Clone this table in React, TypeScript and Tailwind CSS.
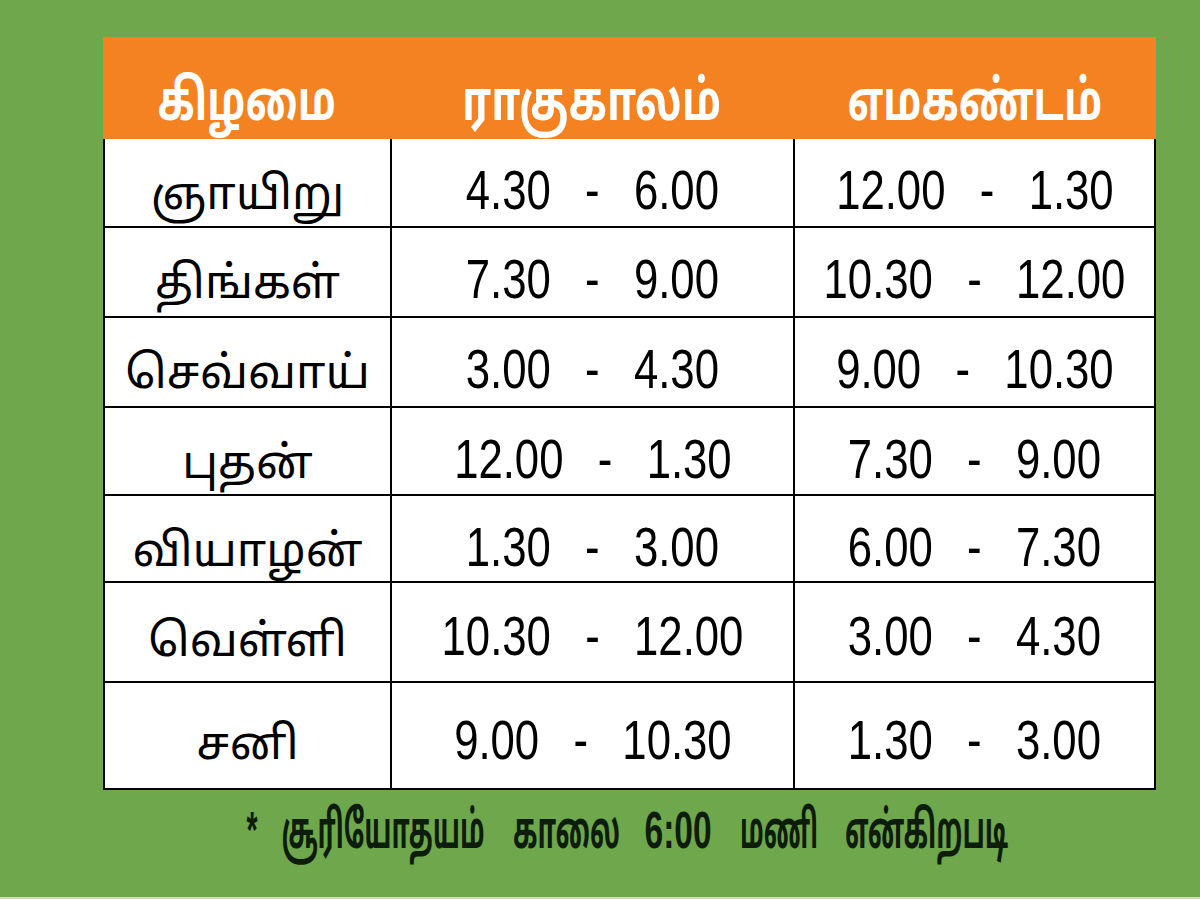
import React, { useLayoutEffect, useRef, useState } from "react";

const rows: { day: string; rahu: [string, string]; ema: [string, string]; h: string }[] = [
  { day: "ஞாயிறு", rahu: ["4.30", "6.00"], ema: ["12.00", "1.30"], h: "h-[89px]" },
  { day: "திங்கள்", rahu: ["7.30", "9.00"], ema: ["10.30", "12.00"], h: "h-[90px]" },
  { day: "செவ்வாய்", rahu: ["3.00", "4.30"], ema: ["9.00", "10.30"], h: "h-[90px]" },
  { day: "புதன்", rahu: ["12.00", "1.30"], ema: ["7.30", "9.00"], h: "h-[88px]" },
  { day: "வியாழன்", rahu: ["1.30", "3.00"], ema: ["6.00", "7.30"], h: "h-[87px]" },
  { day: "வெள்ளி", rahu: ["10.30", "12.00"], ema: ["3.00", "4.30"], h: "h-[100px]" },
  { day: "சனி", rahu: ["9.00", "10.30"], ema: ["1.30", "3.00"], h: "h-[105px]" },
];

const tamil = "font-['Latha','Noto_Sans_Tamil','Lohit_Tamil','Noto_Sans',sans-serif]";
const latin = "font-['Liberation_Sans',Arial,sans-serif]";

function Fit({ w, className, children }: { w: number; className?: string; children: React.ReactNode }) {
  const ref = useRef<HTMLSpanElement>(null);
  const [s, setS] = useState(1);
  useLayoutEffect(() => {
    const measure = () => {
      if (ref.current && ref.current.offsetWidth > 0) setS(w / ref.current.offsetWidth);
    };
    measure();
    if ((document as any).fonts?.ready) (document as any).fonts.ready.then(measure);
  }, [w]);
  return (
    <span className="inline-flex justify-center shrink-0" style={{ width: w }}>
      <span
        ref={ref}
        className={`inline-block whitespace-nowrap origin-center ${className ?? ""}`}
        style={{ transform: `scaleX(${s})` }}
      >
        {children}
      </span>
    </span>
  );
}

function Range({ v }: { v: [string, string] }) {
  return (
    <span className={`inline-flex items-center gap-[44px] scale-x-[0.78] ${latin} text-[56px] leading-none text-black`}>
      <span>{v[0]}</span>
      <span>-</span>
      <span>{v[1]}</span>
    </span>
  );
}

export default function App() {
  const foot = `text-[52px] leading-none font-bold text-[#0e1d0b]`;
  return (
    <div className="w-[1200px] h-[899px] bg-[#6fa84c] pt-[37px] flex flex-col border-b-2 border-[#cfdcb0]">
      <div className="w-[1053px] ml-[103px]">
        <div className="grid grid-cols-[287px_403px_363px] h-[102px] bg-[#f58220] items-center text-white font-bold">
          <div className={`flex justify-center text-[56px] leading-none ${tamil} pt-[36px]`}>
            <Fit w={178}>கிழமை</Fit>
          </div>
          <div className={`flex justify-center text-[56px] leading-none ${tamil} pt-[36px]`}>
            <Fit w={259}>ராகுகாலம்</Fit>
          </div>
          <div className={`flex justify-center text-[56px] leading-none ${tamil} pt-[36px]`}>
            <Fit w={255}>எமகண்டம்</Fit>
          </div>
        </div>
        <div className="bg-white border-x-2 border-b-2 border-black">
          {rows.map((r, i) => (
            <div
              key={r.day}
              className={`grid grid-cols-[285px_403px_361px] ${r.h} ${i < rows.length - 1 ? "border-b-2 border-black" : ""}`}
            >
              <div className={`flex items-center justify-center text-[46px] text-black pt-[24px] ${tamil}`}>{r.day}</div>
              <div className="flex items-center justify-center border-l-2 border-black pt-[8px]">
                <Range v={r.rahu} />
              </div>
              <div className="flex items-center justify-center border-l-2 border-black pt-[8px]">
                <Range v={r.ema} />
              </div>
            </div>
          ))}
        </div>
      </div>
      <div className="flex items-baseline pl-[247px] mt-[14px]">
        <Fit w={11} className={`${latin} ${foot}`}>*</Fit>
        <span className="ml-[24px]">
          <Fit w={203} className={`${tamil} ${foot}`}>சூரியோதயம்</Fit>
        </span>
        <span className="ml-[28px]">
          <Fit w={107} className={`${tamil} ${foot}`}>காலை</Fit>
        </span>
        <span className="ml-[25px]">
          <Fit w={67} className={`${latin} ${foot}`}>6:00</Fit>
        </span>
        <span className="ml-[28px]">
          <Fit w={78} className={`${tamil} ${foot}`}>மணி</Fit>
        </span>
        <span className="ml-[27px]">
          <Fit w={163} className={`${tamil} ${foot}`}>என்கிறபடி</Fit>
        </span>
      </div>
    </div>
  );
}
